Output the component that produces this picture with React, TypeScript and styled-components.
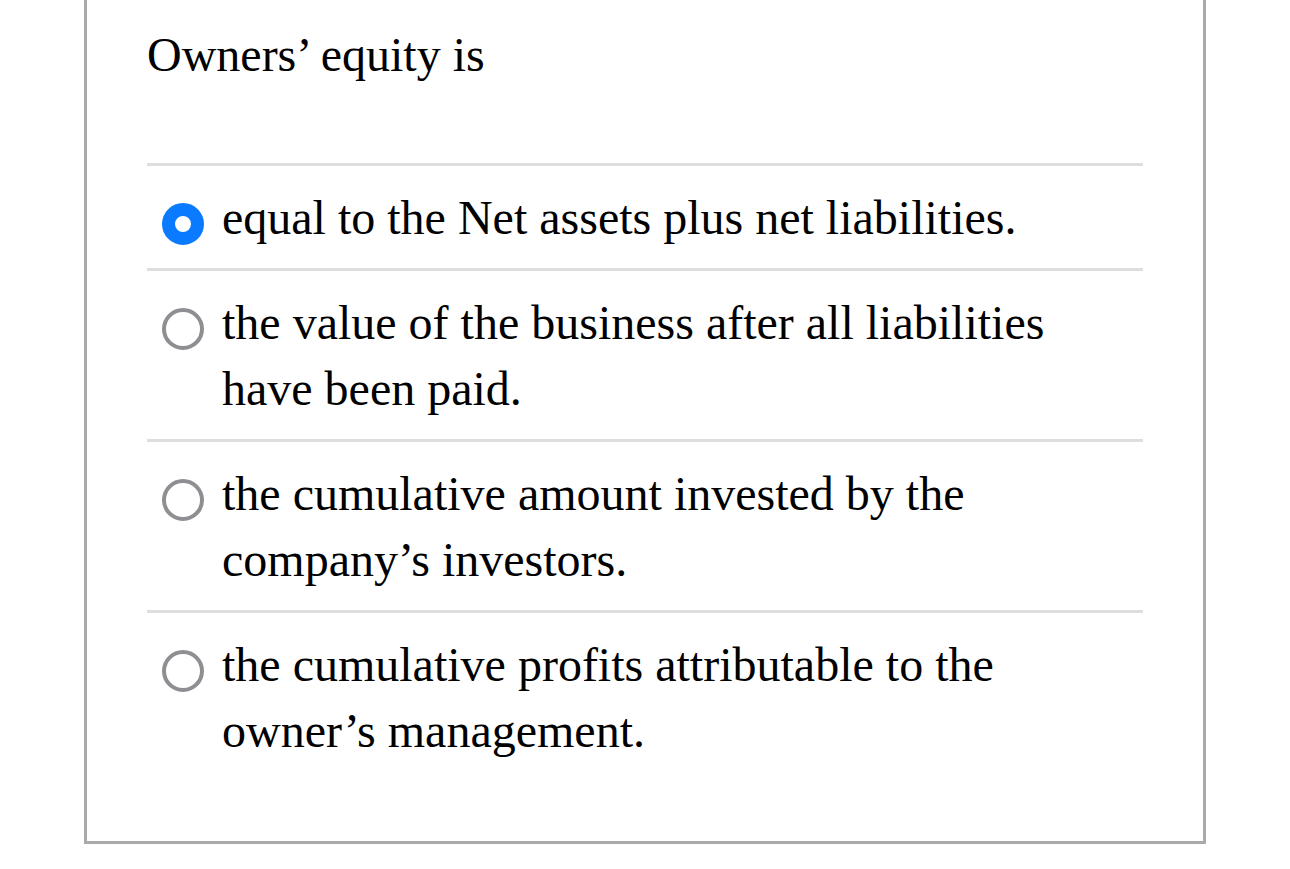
import React, { useState } from "react";
import styled, { createGlobalStyle } from "styled-components";

const GlobalStyle = createGlobalStyle`
  html, body {
    margin: 0;
    padding: 0;
    background: #ffffff;
  }
  body {
    font-family: "Liberation Serif", "Times New Roman", serif;
    color: #000000;
  }
`;

const Page = styled.div`
  padding: 0 84px;
  width: 1290px;
  box-sizing: border-box;
`;

const Card = styled.section`
  width: 1122px;
  box-sizing: border-box;
  border: 3px solid #aaaaaa;
  border-top: none;
  padding: 22px 60px 60px 60px;
`;

const Question = styled.h2`
  margin: 0 0 75px 0;
  font-weight: 400;
  font-size: 48px;
  line-height: 66px;
`;

const Options = styled.div`
  display: flex;
  flex-direction: column;
`;

const Option = styled.label`
  display: flex;
  align-items: flex-start;
  gap: 18px;
  padding: 19px 0 17px 15px;
  border-top: 3px solid #dedede;
  cursor: pointer;
  font-size: 48px;
  line-height: 66px;
`;

const Radio = styled.span<{ $checked: boolean }>`
  flex: none;
  margin-top: 18px;
  width: 42px;
  height: 42px;
  box-sizing: border-box;
  border-radius: 50%;
  border: ${(p) => (p.$checked ? "13.5px solid #0a7aff" : "4px solid #8e8e93")};
  background: #ffffff;
`;

const OptionText = styled.span`
  flex: 1;
  max-width: 840px;
`;

const choices = [
  "equal to the Net assets plus net liabilities.",
  "the value of the business after all liabilities have been paid.",
  "the cumulative amount invested by the company\u2019s investors.",
  "the cumulative profits attributable to the owner\u2019s management.",
];

export default function App() {
  const [selected, setSelected] = useState(0);
  return (
    <>
      <GlobalStyle />
      <Page>
        <Card>
          <Question>Owners’ equity is</Question>
          <Options>
            {choices.map((c, i) => (
              <Option key={i} onClick={() => setSelected(i)}>
                <Radio $checked={selected === i} />
                <OptionText>{c}</OptionText>
              </Option>
            ))}
          </Options>
        </Card>
      </Page>
    </>
  );
}
